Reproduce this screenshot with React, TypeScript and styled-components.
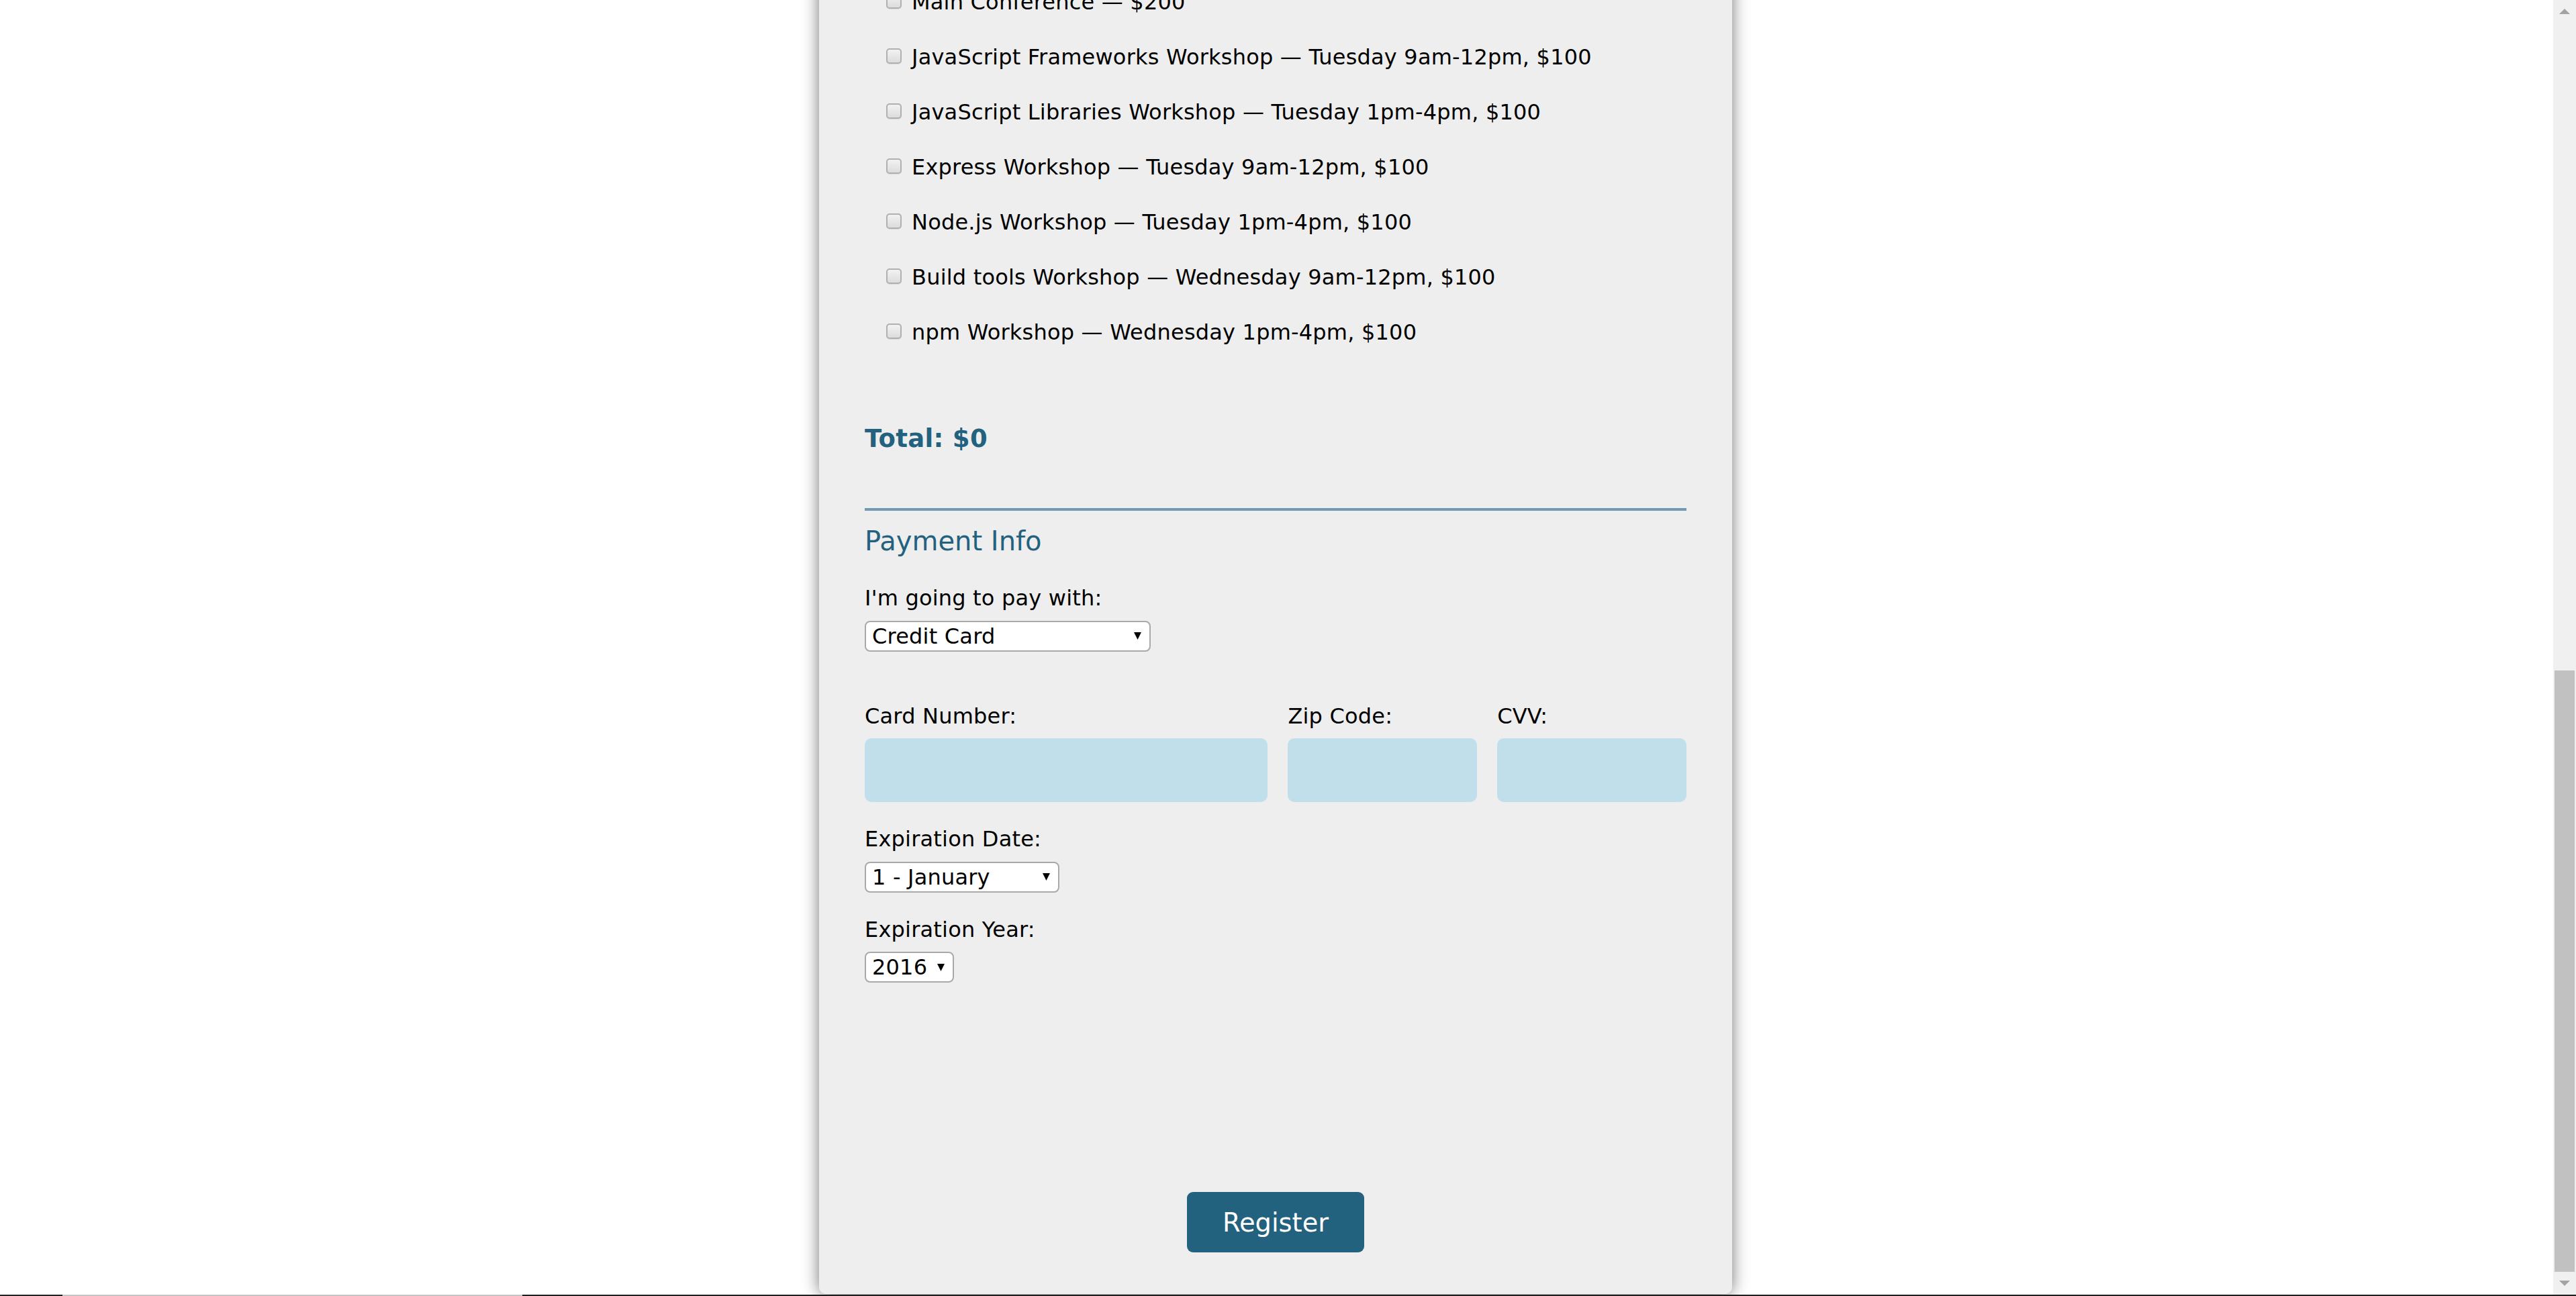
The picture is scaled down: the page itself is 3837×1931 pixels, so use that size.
import React from 'react'
import styled, { createGlobalStyle } from 'styled-components'

const colors = {
    primary: '#22627f',
    rule: '#6e9bb1',
    panel: '#eeeeee',
    field: '#c1dfea',
    text: '#000000',
}

const activities = [
    { name: 'all', label: 'Main Conference — $200' },
    { name: 'js-frameworks', label: 'JavaScript Frameworks Workshop — Tuesday 9am-12pm, $100' },
    { name: 'js-libs', label: 'JavaScript Libraries Workshop — Tuesday 1pm-4pm, $100' },
    { name: 'express', label: 'Express Workshop — Tuesday 9am-12pm, $100' },
    { name: 'node', label: 'Node.js Workshop — Tuesday 1pm-4pm, $100' },
    { name: 'build-tools', label: 'Build tools Workshop — Wednesday 9am-12pm, $100' },
    { name: 'npm', label: 'npm Workshop — Wednesday 1pm-4pm, $100' },
]

const months = ['1 - January', '2 - February', '3 - March', '4 - April', '5 - May', '6 - June',
    '7 - July', '8 - August', '9 - September', '10 - October', '11 - November', '12 - December']

const years = ['2016', '2017', '2018', '2019', '2020']

const Arrow = ({ up = false, color = '#000', w = 11, h = 11 }: { up?: boolean, color?: string, w?: number, h?: number }) => (
    <svg width={w} height={h} viewBox={`0 0 ${w} ${h}`}>
        <polygon points={up ? `0,${h} ${w},${h} ${w / 2},0` : `0,0 ${w},0 ${w / 2},${h}`} fill={color} />
    </svg>
)

const Dropdown = ({ id, width, options }: { id: string, width?: number, options: string[] }) => (
    <SelectBox $width={width}>
        <Select id={id} name={id}>
            {options.map(option => <option key={option}>{option}</option>)}
        </Select>
        <Arrow />
    </SelectBox>
)

const App = () => (
    <>
        <GlobalStyle />
        <Screen>
            <Viewport>
                <Page>
                    <Panel>
                        <ActivityList>
                            {activities.map(activity => (
                                <Activity key={activity.name}>
                                    <Checkbox type="checkbox" name={activity.name} />
                                    <span>{activity.label}</span>
                                </Activity>
                            ))}
                        </ActivityList>

                        <Total>Total: $0</Total>

                        <Payment>
                            <Legend>Payment Info</Legend>

                            <Field $top={43}>
                                <Label htmlFor="payment">I'm going to pay with:</Label>
                                <Dropdown id="payment" width={426} options={['Credit Card', 'PayPal', 'Bitcoin']} />
                            </Field>

                            <CardRow>
                                <Field>
                                    <Label htmlFor="cc-num">Card Number:</Label>
                                    <TextInput id="cc-num" type="text" />
                                </Field>
                                <Field>
                                    <Label htmlFor="zip">Zip Code:</Label>
                                    <TextInput id="zip" type="text" />
                                </Field>
                                <Field>
                                    <Label htmlFor="cvv">CVV:</Label>
                                    <TextInput id="cvv" type="text" />
                                </Field>
                            </CardRow>

                            <Field $top={36}>
                                <Label htmlFor="exp-month">Expiration Date:</Label>
                                <Dropdown id="exp-month" width={290} options={months} />
                            </Field>

                            <Field $top={36}>
                                <Label htmlFor="exp-year">Expiration Year:</Label>
                                <Dropdown id="exp-year" options={years} />
                            </Field>
                        </Payment>

                        <Submit type="submit">Register</Submit>
                    </Panel>
                </Page>

                <Scrollbar>
                    <ScrollButton><Arrow up color="#a3a3a3" w={16} h={8} /></ScrollButton>
                    <Thumb />
                    <ScrollButton><Arrow color="#a3a3a3" w={16} h={8} /></ScrollButton>
                </Scrollbar>
            </Viewport>

            <Taskbar>
                <Segment $width={93} $color="#222222" />
                <Segment $width={685} $color="#c6c6c6" />
                <Segment $color="#1f1f1f" />
            </Taskbar>
        </Screen>
    </>
)

const GlobalStyle = createGlobalStyle`
    html, body{
        margin: 0;
        padding: 0;
        background: #ffffff;
    }
    body{
        font-family: "DejaVu Sans", Verdana, sans-serif;
        font-size: 32px;
        letter-spacing: 0.2px;
        color: ${colors.text};
    }
`

const Screen = styled.div`
    height: 1931px;
    display: flex;
    flex-flow: column nowrap;
    overflow: hidden;
`

const Viewport = styled.div`
    flex: 1 1 auto;
    min-height: 0;
    display: flex;
    flex-flow: row nowrap;
`

const Page = styled.main`
    flex: 1 1 auto;
    min-width: 0;
    padding: 0 3px 0 0;
    overflow: hidden;
`

const Panel = styled.form`
    width: 1360px;
    box-sizing: border-box;
    margin: -38px auto 0;
    padding: 0 68px 62px;
    background: ${colors.panel};
    border-radius: 0 0 10px 10px;
    box-shadow: 0 0 24px rgba(0, 0, 0, 0.55);
`

const ActivityList = styled.div`
    display: flex;
    flex-flow: column nowrap;
`

const Activity = styled.label`
    height: 82px;
    display: flex;
    align-items: center;
    gap: 15px;
    padding: 0 0 0 32px;
    white-space: nowrap;
`

const Checkbox = styled.input`
    appearance: none;
    margin: 0 0 3px 0;
    width: 23px;
    height: 23px;
    box-sizing: border-box;
    border: 2px solid #b0b0b0;
    border-radius: 5px;
    background: linear-gradient(#f2f2f2, #dcdcdc);
    box-shadow: 0 1px 0 rgba(0, 0, 0, 0.08);
`

const Total = styled.p`
    margin: 96px 0 0 0;
    font-size: 37px;
    font-weight: 700;
    letter-spacing: 0.3px;
    color: ${colors.primary};
`

const Payment = styled.section`
    margin: 82px 0 0 0;
    border-top: 4px solid ${colors.rule};
`

const Legend = styled.h3`
    margin: 22px 0 0 0;
    font-size: 40px;
    font-weight: 400;
    letter-spacing: 0;
    color: ${colors.primary};
`

const Field = styled.div<{ $top?: number }>`
    margin: ${p => p.$top || 0}px 0 0 0;
    display: flex;
    flex-flow: column nowrap;
    align-items: flex-start;
    gap: 14.5px;
`

const Label = styled.label`
    display: block;
`

const SelectBox = styled.div<{ $width?: number }>`
    display: inline-flex;
    align-items: center;
    gap: 14px;
    width: ${p => p.$width ? `${p.$width}px` : 'auto'};
    height: 46px;
    box-sizing: border-box;
    padding: 0 12px 0 9px;
    border: 2px solid #a9a9a9;
    border-radius: 8px;
    background: #ffffff;
`

const Select = styled.select`
    appearance: none;
    flex: 1 1 auto;
    min-width: 0;
    margin: 0;
    padding: 0;
    border: 0;
    outline: none;
    background: transparent;
    font: inherit;
    letter-spacing: inherit;
    color: ${colors.text};
`

const CardRow = styled.div`
    margin: 77px 0 0 0;
    display: grid;
    grid-template-columns: 49fr 23fr 23fr;
    column-gap: 30px;

    ${Field}{
        align-items: stretch;
    }
`

const TextInput = styled.input`
    width: 100%;
    height: 95px;
    box-sizing: border-box;
    margin: 0;
    padding: 0 16px;
    border: 0;
    border-radius: 10px;
    background: ${colors.field};
    font: inherit;
    outline: none;
`

const Submit = styled.button`
    display: block;
    margin: 312px auto 0;
    width: 264px;
    height: 90px;
    border: 0;
    border-radius: 9px;
    background: ${colors.primary};
    color: #ffffff;
    font-family: inherit;
    font-size: 38.4px;
    cursor: pointer;
`

const Scrollbar = styled.aside`
    flex: 0 0 34px;
    display: flex;
    flex-flow: column nowrap;
    align-items: center;
    background: #f0f0f0;
`

const ScrollButton = styled.div`
    flex: 0 0 34px;
    width: 100%;
    display: flex;
    align-items: center;
    justify-content: center;
`

const Thumb = styled.div`
    margin-top: auto;
    width: 30px;
    height: 896px;
    background: #c1c1c1;
`

const Taskbar = styled.footer`
    flex: 0 0 2px;
    display: flex;
    flex-flow: row nowrap;
`

const Segment = styled.div<{ $width?: number, $color: string }>`
    flex: ${p => p.$width ? `0 0 ${p.$width}px` : '1 1 auto'};
    background: ${p => p.$color};
`

export default App
